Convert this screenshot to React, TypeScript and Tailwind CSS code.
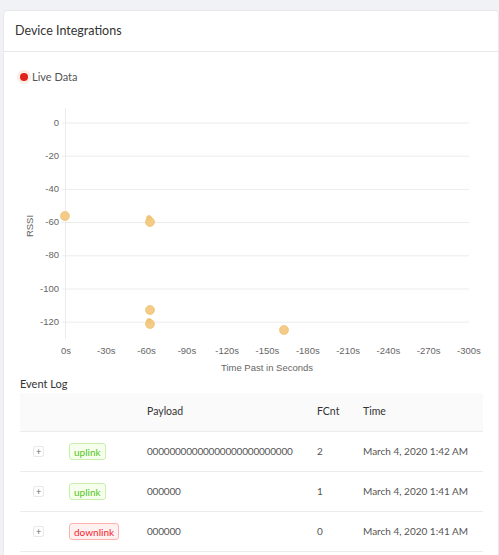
import React from "react";

const yTicks = [0, -20, -40, -60, -80, -100, -120];
const xTicks = ["0s", "-30s", "-60s", "-90s", "-120s", "-150s", "-180s", "-210s", "-240s", "-270s", "-300s"];

const points: { x: number; y: number; r: number }[] = [
  { x: 45, y: 120, r: 4.5 },
  { x: 129, y: 122, r: 2.5 },
  { x: 130, y: 126, r: 4.5 },
  { x: 130, y: 214, r: 4.5 },
  { x: 129, y: 225, r: 2.5 },
  { x: 130, y: 228, r: 4.5 },
  { x: 264, y: 234, r: 4.5 },
];

function Chart() {
  const gy = (i: number) => 27 + i * 33.2;
  const gx = (i: number) => 46 + i * 40.3;
  return (
    <svg width="462" height="280" viewBox="0 0 462 280" className="block" style={{ fontFamily: "'Liberation Sans', Arial, sans-serif" }}>
      {yTicks.map((t, i) => (
        <g key={t}>
          <line x1={42} x2={449} y1={gy(i)} y2={gy(i)} stroke="#ececec" strokeWidth={1} />
          <text x={39} y={gy(i)} textAnchor="end" dominantBaseline="middle" fontSize={9.5} fill="#666">
            {t}
          </text>
        </g>
      ))}
      <line x1={45.5} x2={45.5} y1={12} y2={243} stroke="#ececec" strokeWidth={1} />
      {xTicks.map((t, i) => (
        <text key={t} x={gx(i)} y={258} textAnchor="middle" fontSize={9.5} fill="#666">
          {t}
        </text>
      ))}
      <text x={247} y={275} textAnchor="middle" fontSize={9.5} fill="#666">
        Time Past in Seconds
      </text>
      <text x={13} y={130} textAnchor="middle" fontSize={9.5} fill="#666" transform="rotate(-90 13 130)">
        RSSI
      </text>
      {points.map((p, i) => (
        <circle key={i} cx={p.x} cy={p.y} r={p.r} fill="#f3c77a" fillOpacity={0.9} stroke="#ebb75c" strokeWidth={0.6} />
      ))}
    </svg>
  );
}

function Tag({ kind }: { kind: "uplink" | "downlink" }) {
  if (kind === "uplink")
    return (
      <span className="inline-flex h-[17px] items-center rounded-[3px] border border-[#c9efa9] bg-[#f6ffed] px-[4px] text-[10px] leading-none text-[#52c41a]">
        uplink
      </span>
    );
  return (
    <span className="inline-flex h-[17px] items-center rounded-[3px] border border-[#ffb3ae] bg-[#fff1f0] px-[4px] text-[10px] leading-none text-[#f5222d]">
      downlink
    </span>
  );
}

const rows: { kind: "uplink" | "downlink"; payload: string; fcnt: string; time: string }[] = [
  { kind: "uplink", payload: "00000000000000000000000000", fcnt: "2", time: "March 4, 2020 1:42 AM" },
  { kind: "uplink", payload: "000000", fcnt: "1", time: "March 4, 2020 1:41 AM" },
  { kind: "downlink", payload: "000000", fcnt: "0", time: "March 4, 2020 1:41 AM" },
];

const cols = "grid grid-cols-[49px_78px_170px_46px_1fr] items-center";

export default function App() {
  return (
    <div className="min-h-[555px] bg-[#f0f2f5] pl-[3px] pt-[10px]" style={{ fontFamily: "Lato, 'Noto Sans', sans-serif" }}>
      <div className="h-[560px] rounded-[4px] border border-[#e8e8e8] bg-white">
        <div className="flex h-[41px] items-center border-b border-[#e8e8e8] px-[11px]">
          <span className="text-[12.5px] text-[#333]">Device Integrations</span>
        </div>
        <div className="px-[16px]">
          <div className="mt-[18px] flex h-[14px] items-center gap-[4px]">
            <span className="h-[8px] w-[8px] rounded-full bg-[#e0241b] ring-[3px] ring-[#fbeee6]" />
            <span className="text-[11px] text-[#555]">Live Data</span>
          </div>
          <div className="mt-[12px]">
            <Chart />
          </div>
          <div className="mt-[1px] text-[11px] leading-[14px] text-[#333]">Event Log</div>
          <div className="mt-[2px] w-[463px] text-[#555]">
            <div className={`${cols} h-[39px] border-b border-[#ececec] bg-[#fafafa] text-[10.5px] text-[#333]`}>
              <span />
              <span />
              <span>Payload</span>
              <span>FCnt</span>
              <span>Time</span>
            </div>
            {rows.map((r, i) => (
              <div key={i} className={`${cols} h-[40px] border-b border-[#ececec] text-[10px]`}>
                <span className="pl-[13px]">
                  <span className="flex h-[11px] w-[11px] items-center justify-center rounded-[2px] border border-[#e8e8e8] bg-white text-[9px] leading-none text-[#666]">
                    +
                  </span>
                </span>
                <span>
                  <Tag kind={r.kind} />
                </span>
                <span className="tracking-[-0.2px]">{r.payload}</span>
                <span>{r.fcnt}</span>
                <span>{r.time}</span>
              </div>
            ))}
          </div>
        </div>
      </div>
    </div>
  );
}
